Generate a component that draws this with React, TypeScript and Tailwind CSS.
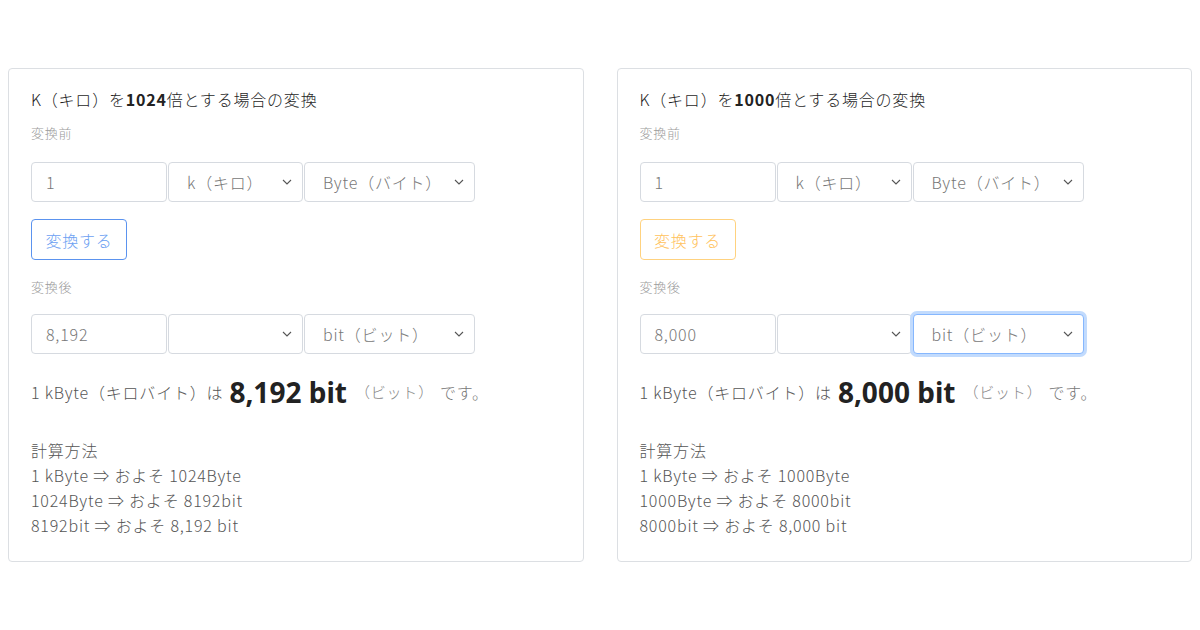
const font = { fontFamily: '"Noto Sans CJK JP", "Noto Sans", sans-serif' };

function Chevron() {
  return (
    <svg
      className="pointer-events-none absolute right-[10px] top-1/2 -translate-y-1/2"
      width="10"
      height="6"
      viewBox="0 0 10 6"
      fill="none"
    >
      <path d="M1 1l4 4 4-4" stroke="#555" strokeWidth="1.1" />
    </svg>
  );
}

function Field({ value, width }: { value: string; width: string }) {
  return (
    <div
      className={`${width} h-[40px] flex items-center pl-[14px] border border-[#d6dae0] rounded-[4px] bg-white text-[16px] text-[#777]`}
    >
      {value}
    </div>
  );
}

function Select({ value, width, focused }: { value: string; width: string; focused?: boolean }) {
  return (
    <div
      className={`${width} relative h-[40px] flex items-center pl-[18px] rounded-[4px] bg-white text-[16px] text-[#777] ${
        focused ? 'border border-[#86b7fe] ring-[3px] ring-[#c2dbfd]' : 'border border-[#d6dae0]'
      }`}
    >
      {value}
      <Chevron />
    </div>
  );
}

interface CardProps {
  mult: string;
  result: string;
  steps: string[];
  orange?: boolean;
}

function Card({ mult, result, steps, orange }: CardProps) {
  return (
    <div className="flex-1 border border-[#dcdfe3] rounded-[4px] bg-white px-[22px] pt-[18px] pb-[23px] tracking-[0.05em] font-light">
      <div className="text-[16px] leading-[24px] text-[#1f1f1f]">
        K（キロ）を<span className="font-bold text-[#222]">{mult}</span>倍とする場合の変換
      </div>
      <div className="mt-[12px] text-[13px] leading-[20px] text-[#9a9a9a]">変換前</div>
      <div className="mt-[19px] flex gap-[1px]">
        <Field value="1" width="w-[136px]" />
        <Select value="k（キロ）" width="w-[135px]" />
        <Select value="Byte（バイト）" width="w-[171px]" />
      </div>
      <div className="mt-[17px]">
        <button
          className={`h-[41px] w-[96px] rounded-[4px] border text-[16px] ${
            orange ? 'border-[#ffd27f] text-[#ffc25c]' : 'border-[#5b93ef] text-[#6c9ff2]'
          }`}
        >
          変換する
        </button>
      </div>
      <div className="mt-[17px] text-[13px] leading-[20px] text-[#9a9a9a]">変換後</div>
      <div className="mt-[17px] flex gap-[1px]">
        <Field value={result} width="w-[136px]" />
        <Select value="" width="w-[135px]" />
        <Select value="bit（ビット）" width="w-[171px]" focused={orange} />
      </div>
      <div className="mt-[18px] h-[40px] flex items-center text-[16px] text-[#555]">
        <span>1 kByte（キロバイト）は</span>
        <span
          className="ml-[6px] text-[28px] font-bold text-[#222] tracking-normal"
          style={{ fontFamily: '"Noto Sans", sans-serif' }}
        >
          {result} bit
        </span>
        <span className="ml-[8px] text-[15px] text-[#888]">（ビット）</span>
        <span className="ml-[6px] text-[#777]">です。</span>
      </div>
      <div className="mt-[26px] text-[16px] leading-[25px] text-[#555]">
        <div>計算方法</div>
        {steps.map((s) => (
          <div key={s}>{s}</div>
        ))}
      </div>
    </div>
  );
}

export default function App() {
  return (
    <div className="w-[1200px] h-[630px] bg-white pt-[68px] px-[8px] flex gap-[33px] items-start" style={font}>
      <Card
        mult="1024"
        result="8,192"
        steps={['1 kByte ⇒ およそ 1024Byte', '1024Byte ⇒ およそ 8192bit', '8192bit ⇒ およそ 8,192 bit']}
      />
      <Card
        mult="1000"
        result="8,000"
        orange
        steps={['1 kByte ⇒ およそ 1000Byte', '1000Byte ⇒ およそ 8000bit', '8000bit ⇒ およそ 8,000 bit']}
      />
    </div>
  );
}
